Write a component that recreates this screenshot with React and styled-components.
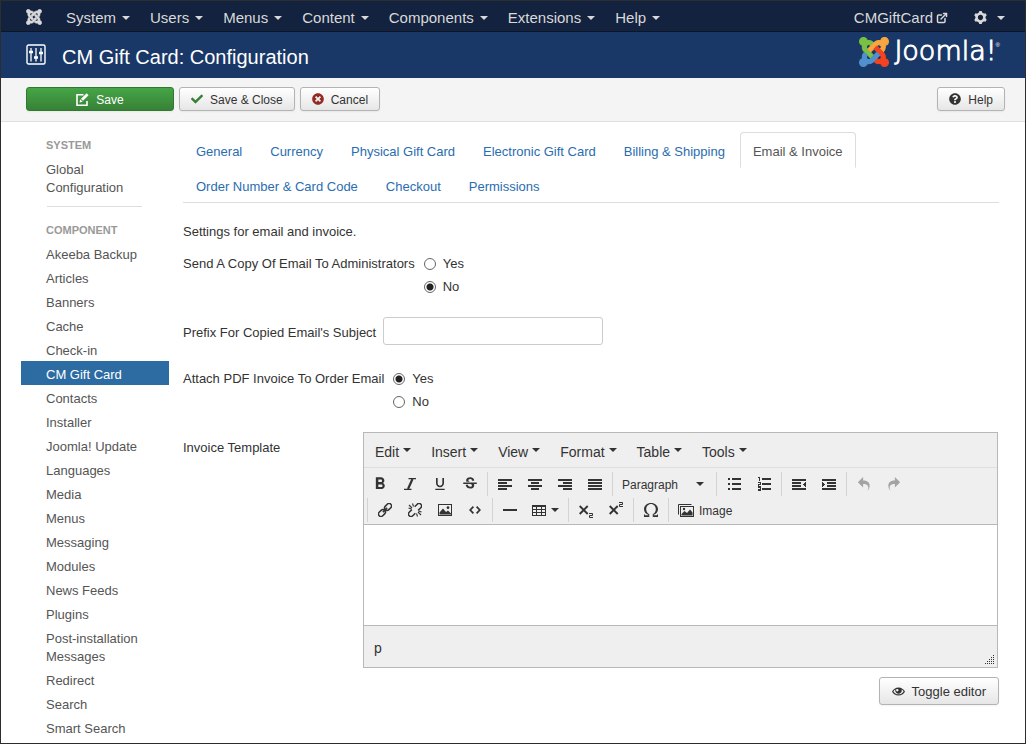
import React from 'react';
import styled, { createGlobalStyle, css } from 'styled-components';
import { ExternalLink } from 'lucide-react';
import { FaCheck, FaQuestionCircle, FaTimesCircle } from 'react-icons/fa';
import { MdFormatBold, MdFormatUnderlined, MdStrikethroughS } from 'react-icons/md';
import { ImCog, ImEye, ImOmega, ImRedo2, ImUndo2 } from 'react-icons/im';

const GlobalStyle = createGlobalStyle`
  *, *::before, *::after { box-sizing: border-box; }
  body {
    margin: 0;
    background: #fff;
    color: #333;
    font: 13px/18px "Liberation Sans", Arial, sans-serif;
  }
  button, input, select, textarea { font: inherit; color: inherit; margin: 0; }
  a { text-decoration: none; }
  svg { display: block; flex: none; }
`;

const Frame = styled.div`
  min-height: 100vh;
  border: 1px solid #2b2d2e;
  background: #fff;
`;

const Caret = styled.span`
  flex: none;
  width: 0;
  height: 0;
  border: 4px solid transparent;
  border-top-color: currentColor;
  border-bottom: 0;
`;

/* Top bars */

const NavBar = styled.nav`
  display: flex;
  align-items: center;
  height: 31px;
  padding: 0 10px 0 25px;
  background: #13223f;
  border-bottom: 1px solid #0b1629;
  color: #d9d9d9;
`;

const Brand = styled.a`
  margin: 2px 14px 0 0;
  color: #d9d9d9;
`;

const NavItem = styled.button`
  display: flex;
  align-items: center;
  gap: ${(p) => p.$gap || 6}px;
  padding: 3px 10px 0;
  border: 0;
  background: none;
  font-size: 15px;
  line-height: 20px;
`;

const SiteLink = styled(NavItem).attrs({ as: 'a' })`
  margin-left: auto;
  margin-right: 6px;
  color: #d9d9d9;
`;

const TitleBar = styled.header`
  display: flex;
  align-items: center;
  height: 46px;
  padding: 0 25px;
  background: #1a3867;
  color: #fff;
`;

const Title = styled.h1`
  margin: 3px 0 0 16px;
  font-size: 20px;
  line-height: 24px;
  font-weight: 400;
`;

const Logo = styled.a`
  display: flex;
  align-items: flex-start;
  gap: 5px;
  height: 36px;
  margin-left: auto;
  color: #fff;
`;

const Wordmark = styled.span`
  font: 200 27px/28px "DejaVu Sans", sans-serif;
  -webkit-text-stroke: 1px #fff;
`;

const Registered = styled.sup`
  margin-left: -6px;
  font-size: 6px;
  line-height: 16px;
`;

const ActionBar = styled.div`
  display: flex;
  gap: 5px;
  padding: 9px 20px 10px 25px;
  background: #f4f4f4;
  border-bottom: 1px solid #dfdfdf;
`;

const Button = styled.button`
  display: flex;
  align-items: center;
  justify-content: center;
  gap: 7px;
  height: ${(p) => (p.$large ? 28 : 24)}px;
  padding: 2px ${(p) => (p.$large ? 12 : 11)}px 0;
  border: 1px solid #b3b3b3;
  border-radius: 3px;
  background: linear-gradient(#fff, #e6e6e6);
  box-shadow: 0 1px 2px rgba(0, 0, 0, 0.05);
  font-size: ${(p) => (p.$large ? 13 : 12)}px;
  line-height: 18px;

  svg { margin-bottom: 2px; }

  ${(p) =>
    p.$primary &&
    css`
      width: 148px;
      border-color: #2f7a2f;
      background: linear-gradient(#46a546, #378137);
      color: #fff;
    `}
`;

const HelpButton = styled(Button)`
  margin-left: auto;
`;

/* Body */

const Body = styled.div`
  display: flex;
  align-items: flex-start;
  gap: 14px;
  padding: 0 26px 0 20px;
`;

const Sidebar = styled.nav`
  flex: none;
  width: 148px;
  padding-top: 11px;
`;

const SideHeading = styled.h2`
  margin: 0;
  padding: 3px 25px 2px;
  color: #999;
  font-size: 11px;
  line-height: 18px;
  font-weight: 700;
  text-transform: uppercase;
`;

const SideLink = styled.a`
  display: block;
  padding: 5px 25px 1px;
  color: ${(p) => (p.$active ? '#fff' : '#555')};
  background: ${(p) => (p.$active ? '#2d6ca2' : 'transparent')};
`;

const Divider = styled.hr`
  margin: 8px 27px 11px 26px;
  border: 0;
  border-top: 1px solid #ddd;
`;

const Main = styled.main`
  flex: 1;
  min-width: 0;
  padding-top: 10px;
`;

const Tabs = styled.ul`
  display: flex;
  flex-wrap: wrap;
  margin: 0 0 20px;
  padding: 0;
  list-style: none;
  border-bottom: 1px solid #ddd;
`;

const Tab = styled.li`
  margin: 0 2px -1px 0;
`;

const TabLink = styled.a`
  display: block;
  padding: 10px 12px 6px;
  border: 1px solid transparent;
  border-radius: 4px 4px 0 0;
  color: #2a6db0;

  ${(p) =>
    p.$active &&
    css`
      border-color: #ddd #ddd transparent;
      background: #fff;
      color: #555;
    `}
`;

const Intro = styled.p`
  margin: 0 0 6px;
`;

const Form = styled.form`
  display: flex;
  flex-direction: column;
  gap: 17px;
`;

const Field = styled.div`
  display: flex;
  align-items: center;
  gap: 7px;
`;

const FieldLabel = styled.label`
  padding-top: 3px;
`;

const RadioField = styled.div`
  display: flex;
  gap: 9px;
  padding: 8px 0 4px;
`;

const RadioList = styled.div`
  display: flex;
  flex-direction: column;
  gap: 5px;
`;

const RadioLabel = styled.label`
  display: flex;
  align-items: center;
  gap: 7px;
`;

const Radio = styled.input.attrs({ type: 'radio' })`
  appearance: none;
  width: 12px;
  height: 12px;
  border: 1px solid #666;
  border-radius: 50%;
  background: #fff;

  &:checked {
    background: radial-gradient(circle, #222 0 3px, #fff 4px);
  }
`;

const TextInput = styled.input`
  width: 220px;
  height: 28px;
  padding: 4px 6px;
  border: 1px solid #ccc;
  border-radius: 3px;
  background: #fff;
`;

const EditorField = styled.div`
  display: grid;
  grid-template-columns: 180px 1fr;
`;

const EditorLabel = styled.label`
  padding-top: 7px;
`;

const EditorColumn = styled.div`
  display: flex;
  flex-direction: column;
  align-items: flex-end;
  gap: 9px;
`;

/* Editor */

const Editor = styled.div`
  align-self: stretch;
  margin-right: 1px;
  border: 1px solid #b8b8b8;
  background: #efefef;
`;

const MenuBar = styled.div`
  display: flex;
  height: 35px;
  padding-left: 1px;
  border-bottom: 1px solid #dedede;
`;

const MenuButton = styled.button`
  display: flex;
  align-items: center;
  gap: 4px;
  padding: 3px 10px 0;
  border: 0;
  background: none;
  font-size: 14px;

  ${Caret} { margin-bottom: 4px; }
`;

const ToolRows = styled.div`
  display: flex;
  flex-direction: column;
  gap: 2px;
  padding: 4px 0 2px;
  border-bottom: 1px solid #b8b8b8;
`;

const ToolRow = styled.div`
  display: flex;
  padding-left: ${(p) => (p.$indent ? 3 : 0)}px;
`;

const ToolGroup = styled.div`
  display: flex;
  height: 24px;
  padding: 0 2px;
  border-left: 1px solid #d3d3d3;

  ${(p) =>
    p.$plain &&
    css`
      border-left: 0;
      padding-left: 1px;
    `}
`;

const Tool = styled.button`
  display: flex;
  align-items: center;
  justify-content: center;
  gap: 5px;
  width: ${(p) => (p.$wide ? 'auto' : '30px')};
  padding: ${(p) => (p.$wide ? '0 7px' : '0')};
  border: 0;
  background: none;
  font-size: 12px;
  color: ${(p) => (p.disabled ? '#a3a3a3' : '#333')};
`;

const FormatPicker = styled.label`
  display: flex;
  align-items: center;
  width: 99px;
  padding-right: 10px;
`;

const FormatSelect = styled.select`
  appearance: none;
  flex: 1;
  min-width: 0;
  padding: 2px 0 0 7px;
  border: 0;
  background: none;
  font-size: 12px;
`;

const ToolText = styled.span`
  padding-top: 2px;
`;

const EditorArea = styled.textarea`
  display: block;
  width: 100%;
  height: 100px;
  padding: 8px;
  border: 0;
  background: #fff;
  resize: none;
`;

const StatusBar = styled.div`
  display: flex;
  align-items: center;
  justify-content: space-between;
  height: 42px;
  padding: 3px 3px 0 10px;
  border-top: 1px solid #b8b8b8;
  font-size: 14px;
`;

const Grip = styled.svg`
  align-self: flex-end;
  margin-bottom: 3px;
`;

/* Drawings */

const JOOMLA_ARMS = [
  ['#7ac143', 'M.6 92.1C.6 58.8 27.4 32 60.4 32c30 0 54.5 21.9 59.2 50.2 32.6-7.6 67.1.6 96.5 30l-44.3 44.3c-20.5-20.5-42.6-16.3-55.4-3.5-14.3 14.3-14.3 37.9 0 52.2l99.5 99.5-44 44.3c-87.7-87.2-49.7-49.7-99.8-99.7-26.8-26.5-35-64.8-24.8-98.9C20.4 144.6.6 120.7.6 92.1z'],
  ['#f9a541', 'M130.1 208.5l44.3 44.3c10-10 89.7-89.7 99.7-99.8 14.3-14.3 37.6-14.3 51.9 0 12.8 12.8 17 35-3.5 55.4l44 44.3c31.2-31.2 38.5-67.6 28.9-101.2 29.2-4.1 51.9-29.2 51.9-59.5 0-33.2-26.8-60.1-59.8-60.1-30.3 0-55.4 22.5-59.5 51.6-33.8-9.9-71.7-1.5-98.3 25.1-18.3 19.1-71.1 71.5-99.6 99.9z'],
  ['#f44321', 'M396.4 360.7c8.2-32.7-.9-68.5-26.3-93.9-11.8-12.2 5 4.7-99.5-99.7l-44.3 44.3 99.7 99.7c14.3 14.3 14.3 37.6 0 51.9-12.8 12.8-35 17-55.4-3.5l-44 44.3c27.6 30.2 68 38.8 102.7 28 5.5 27.4 29.7 48.1 58.9 48.1 33 0 59.8-26.8 59.8-60.1 0-30.2-22.5-55-51.6-59.1z'],
  ['#5091cd', 'M312.1 307.6l-44-44.3c-87 86.4-50.4 50.4-99.7 99.8-14.3 14.3-37.6 14.3-51.9 0-13.1-13.4-16.9-35.3 3.2-55.4l-44-44.3c-30.2 30.2-38 65.2-29.5 98.3-26.7 6-46.2 29.9-46.2 58.2C0 453.2 26.8 480 59.8 480c28.6 0 52.5-19.8 58.6-46.7 32.7 8.2 68.5-.6 94.2-26 32.1-32 12.2-12.4 99.5-99.7z'],
];

const JoomlaMark = ({ size, mono }) => (
  <svg width={size} height={size} viewBox="-8 24 464 464" aria-hidden="true">
    {JOOMLA_ARMS.map(([color, d]) => (
      <path
        key={color}
        d={d}
        fill={mono ? 'currentColor' : color}
        stroke={mono ? 'currentColor' : color}
        strokeWidth="16"
      />
    ))}
  </svg>
);

const SlidersIcon = () => (
  <svg width="20" height="22" viewBox="0 0 20 22" fill="none" stroke="currentColor" aria-hidden="true">
    <rect x="1" y="1" width="18" height="19" rx="1.5" strokeWidth="1.4" />
    <path d="M5 4v13.500M10 4v13.500M15 4v13.500" strokeWidth="1.300" />
    <path d="M3 8h4M8 13.500h4M13 9h4" strokeWidth="2.400" />
  </svg>
);

const EditIcon = () => (
  <svg width="13" height="13" viewBox="0 0 13 13" fill="none" stroke="currentColor" aria-hidden="true">
    <path d="M7.500 1.800H1v10.400h10V8" strokeWidth="1.600" />
    <path d="M11.600 1.200L6 6.800" strokeWidth="2.800" />
    <path d="M4.200 6.200l2.500 2.500-3.200.8z" fill="currentColor" stroke="none" />
  </svg>
);

const Lines = ({ rows, children }) => (
  <svg width="14" height="11" viewBox="0 0 14 11" fill="currentColor" shapeRendering="crispEdges" aria-hidden="true">
    {rows.map(([x, w], i) => (
      <rect key={i} x={x} y={i * 3} width={w} height="2" />
    ))}
    {children}
  </svg>
);

const LEFT = [[0, 14], [0, 9], [0, 14], [0, 9]];
const CENTER = [[0, 14], [3, 8], [0, 14], [3, 8]];
const RIGHT = [[0, 14], [5, 9], [0, 14], [5, 9]];
const FULL = [[0, 14], [0, 14], [0, 14], [0, 14]];

const ItalicIcon = () => (
  <svg width="12" height="12" viewBox="0 0 12 12" fill="none" stroke="currentColor" aria-hidden="true">
    <path d="M4.500 .700H12M0 11.300h7.500" strokeWidth="1.300" />
    <path d="M8.500 1L4 11" strokeWidth="2.200" />
  </svg>
);

const ChainIcon = () => (
  <svg width="14" height="14" viewBox="0 0 14 14" fill="none" stroke="currentColor" strokeWidth="1.500" aria-hidden="true">
    <g transform="rotate(-45 7 7)">
      <rect x="-1.200" y="4.500" width="7.700" height="5" rx="2.500" />
      <rect x="7.500" y="4.500" width="7.700" height="5" rx="2.500" />
      <path d="M4 7h6" />
    </g>
  </svg>
);

const BrokenChainIcon = () => (
  <svg width="14" height="14" viewBox="0 0 14 14" fill="none" stroke="currentColor" aria-hidden="true">
    <g transform="rotate(-45 7 7)" strokeWidth="1.500">
      <path d="M5 4.500H1.300a2.500 2.500 0 0 0 0 5H5M9 4.500h3.700a2.500 2.500 0 0 1 0 5H9" />
    </g>
    <path d="M1 2l3 3M4.500 .5l1 3M.5 5l3 1M13 12l-3-3M9.500 13.500l-1-3M13.500 9l-3-1" strokeWidth="1.100" />
  </svg>
);

const BulletIcon = () => (
  <svg width="14" height="12" viewBox="0 0 14 12" fill="currentColor" shapeRendering="crispEdges" aria-hidden="true">
    <path d="M1 0h2v2H1zM1 5h2v2H1zM1 10h2v2H1zM5 0h9v2H5zM5 5h9v2H5zM5 10h9v2H5z" />
  </svg>
);

const NumberIcon = () => (
  <svg width="14" height="14" viewBox="0 0 14 14" fill="none" stroke="currentColor" shapeRendering="crispEdges" aria-hidden="true">
    <path d="M5 2h9M5 7h9M5 12h9" strokeWidth="2" />
    <path d="M1 .5h1M2.500 0v4M1 5.500h2.500v2h-2v2H4M1 10.500h2.500v3H1M1 12h2" />
  </svg>
);

const PictureIcon = () => (
  <svg width="14" height="12" viewBox="0 0 14 12" aria-hidden="true">
    <rect x=".5" y=".5" width="13" height="11" fill="none" stroke="currentColor" />
    <path d="M1.500 10.500V8.500l3.500-4 3 3.500 2-1.500 3 3v1z" fill="currentColor" />
    <circle cx="10" cy="3.700" r="1.400" fill="currentColor" />
  </svg>
);

const PicturesIcon = () => (
  <svg width="16" height="13" viewBox="0 0 16 13" fill="none" stroke="currentColor" aria-hidden="true">
    <path d="M.5 10.500V.5h13" />
    <rect x="2.500" y="2.500" width="13" height="10" />
    <path d="M3.500 11.500V10l3-3 2.500 2 3-3.500 2.500 3v3z" fill="currentColor" stroke="none" />
    <circle cx="6" cy="5" r="1.200" fill="currentColor" stroke="none" />
  </svg>
);

const CodeIcon = () => (
  <svg width="12" height="8" viewBox="0 0 12 8" fill="none" stroke="currentColor" strokeWidth="1.700" aria-hidden="true">
    <path d="M4.400 .6L1.200 4l3.200 3.400M7.600 .6L10.800 4 7.600 7.400" />
  </svg>
);

const RuleIcon = () => (
  <svg width="14" height="2" viewBox="0 0 14 2" aria-hidden="true">
    <path d="M0 0h14v2H0z" fill="currentColor" />
  </svg>
);

const TableIcon = () => (
  <svg width="14" height="11" viewBox="0 0 14 11" fill="none" stroke="currentColor" shapeRendering="crispEdges" aria-hidden="true">
    <path d="M.5 .5h13v10H.5zM0 1.500h14M0 4.500h14M0 7.500h14M4.500 0v11M9.500 0v11" />
  </svg>
);

const ScriptIcon = ({ up }) => (
  <svg width="14" height="16" viewBox="0 0 14 16" fill="none" stroke="currentColor" aria-hidden="true">
    <path d="M.7 4l8 8M8.700 4l-8 8" strokeWidth="1.900" />
    <path d={up ? 'M10 .5h3.500v2h-3v2H14' : 'M10 11.500h3.500v2h-3v2H14'} />
  </svg>
);

const GRIP_DOTS = [0, 1, 2, 3, 4].flatMap((row) =>
  Array.from({ length: row + 1 }, (_, i) => [8 - i * 2, row * 2])
);

/* Data */

const MENUS = ['System', 'Users', 'Menus', 'Content', 'Components', 'Extensions', 'Help'];

const COMPONENTS = [
  'Akeeba Backup', 'Articles', 'Banners', 'Cache', 'Check-in', 'CM Gift Card', 'Contacts',
  'Installer', 'Joomla! Update', 'Languages', 'Media', 'Menus', 'Messaging', 'Modules',
  'News Feeds', 'Plugins', 'Post-installation Messages', 'Redirect', 'Search', 'Smart Search',
];

const TABS = [
  'General', 'Currency', 'Physical Gift Card', 'Electronic Gift Card', 'Billing & Shipping',
  'Email & Invoice', 'Order Number & Card Code', 'Checkout', 'Permissions',
];

const EDITOR_MENUS = ['Edit', 'Insert', 'View', 'Format', 'Table', 'Tools'];

const TOOLS_TOP = [
  [
    { name: 'Bold', icon: <MdFormatBold size={20} /> },
    { name: 'Italic', icon: <ItalicIcon /> },
    { name: 'Underline', icon: <MdFormatUnderlined size={16} /> },
    { name: 'Strikethrough', icon: <MdStrikethroughS size={18} /> },
  ],
  [
    { name: 'Align left', icon: <Lines rows={LEFT} /> },
    { name: 'Align center', icon: <Lines rows={CENTER} /> },
    { name: 'Align right', icon: <Lines rows={RIGHT} /> },
    { name: 'Justify', icon: <Lines rows={FULL} /> },
  ],
];

const TOOLS_TOP_END = [
  [
    { name: 'Bullet list', icon: <BulletIcon /> },
    { name: 'Numbered list', icon: <NumberIcon /> },
  ],
  [
    {
      name: 'Decrease indent',
      icon: <Lines rows={[[0, 14], [0, 9], [0, 9], [0, 14]]}><path d="M14 3v5l-3-2.500z" /></Lines>,
    },
    {
      name: 'Increase indent',
      icon: <Lines rows={[[0, 14], [5, 9], [5, 9], [0, 14]]}><path d="M0 3v5l3-2.500z" /></Lines>,
    },
  ],
  [
    { name: 'Undo', icon: <ImUndo2 size={14} />, disabled: true },
    { name: 'Redo', icon: <ImRedo2 size={14} />, disabled: true },
  ],
];

const TOOLS_BOTTOM = [
  [
    { name: 'Insert link', icon: <ChainIcon /> },
    { name: 'Remove link', icon: <BrokenChainIcon /> },
    { name: 'Insert image', icon: <PictureIcon /> },
    { name: 'Source code', icon: <CodeIcon /> },
  ],
  [
    { name: 'Horizontal line', icon: <RuleIcon /> },
    { name: 'Table', icon: <><TableIcon /><Caret /></>, wide: true },
  ],
  [
    { name: 'Subscript', icon: <ScriptIcon /> },
    { name: 'Superscript', icon: <ScriptIcon up /> },
  ],
  [{ name: 'Special character', icon: <ImOmega size={14} /> }],
];

const Groups = ({ groups, plainFirst }) =>
  groups.map((tools, i) => (
    <ToolGroup key={i} $plain={plainFirst && i === 0}>
      {tools.map(({ name, icon, disabled, wide }) => (
        <Tool key={name} type="button" aria-label={name} disabled={disabled} $wide={wide}>
          {icon}
        </Tool>
      ))}
    </ToolGroup>
  ));

const YesNo = ({ label, name, value }) => (
  <RadioField role="radiogroup" aria-label={label}>
    <span>{label}</span>
    <RadioList>
      {['Yes', 'No'].map((option) => (
        <RadioLabel key={option}>
          <Radio name={name} value={option} defaultChecked={option === value} />
          {option}
        </RadioLabel>
      ))}
    </RadioList>
  </RadioField>
);

export default function App() {
  return (
    <Frame>
      <GlobalStyle />
      <NavBar>
        <Brand href="#" aria-label="Control panel"><JoomlaMark size={16} mono /></Brand>
        {MENUS.map((menu) => (
          <NavItem key={menu} type="button">{menu}<Caret /></NavItem>
        ))}
        <SiteLink href="#" $gap={3}>CMGiftCard<ExternalLink size={12} strokeWidth={3} /></SiteLink>
        <NavItem type="button" aria-label="Account" $gap={10}><ImCog size={13} /><Caret /></NavItem>
      </NavBar>
      <TitleBar>
        <SlidersIcon />
        <Title>CM Gift Card: Configuration</Title>
        <Logo href="#" aria-label="Joomla!">
          <JoomlaMark size={30} />
          <Wordmark>Joomla!</Wordmark>
          <Registered>®</Registered>
        </Logo>
      </TitleBar>
      <ActionBar>
        <Button type="button" $primary><EditIcon />Save</Button>
        <Button type="button"><FaCheck size={12} color="#378137" />Save &amp; Close</Button>
        <Button type="button"><FaTimesCircle size={12} color="#942a25" />Cancel</Button>
        <HelpButton type="button"><FaQuestionCircle size={12} />Help</HelpButton>
      </ActionBar>
      <Body>
        <Sidebar>
          <SideHeading>System</SideHeading>
          <SideLink href="#">Global Configuration</SideLink>
          <Divider />
          <SideHeading>Component</SideHeading>
          {COMPONENTS.map((name) => (
            <SideLink key={name} href="#" $active={name === 'CM Gift Card'}>{name}</SideLink>
          ))}
        </Sidebar>
        <Main>
          <Tabs>
            {TABS.map((tab) => (
              <Tab key={tab}><TabLink href="#" $active={tab === 'Email & Invoice'}>{tab}</TabLink></Tab>
            ))}
          </Tabs>
          <Intro>Settings for email and invoice.</Intro>
          <Form>
            <YesNo label="Send A Copy Of Email To Administrators" name="copy" value="No" />
            <Field>
              <FieldLabel htmlFor="prefix">Prefix For Copied Email's Subject</FieldLabel>
              <TextInput id="prefix" type="text" />
            </Field>
            <YesNo label="Attach PDF Invoice To Order Email" name="attach" value="Yes" />
            <EditorField>
              <EditorLabel htmlFor="template">Invoice Template</EditorLabel>
              <EditorColumn>
                <Editor>
                  <MenuBar>
                    {EDITOR_MENUS.map((menu) => (
                      <MenuButton key={menu} type="button">{menu}<Caret /></MenuButton>
                    ))}
                  </MenuBar>
                  <ToolRows>
                    <ToolRow>
                      <Groups groups={TOOLS_TOP} plainFirst />
                      <ToolGroup>
                        <FormatPicker>
                          <FormatSelect aria-label="Block format">
                            <option>Paragraph</option>
                          </FormatSelect>
                          <Caret />
                        </FormatPicker>
                      </ToolGroup>
                      <Groups groups={TOOLS_TOP_END} />
                    </ToolRow>
                    <ToolRow $indent>
                      <Groups groups={TOOLS_BOTTOM} />
                      <ToolGroup>
                        <Tool type="button" $wide><PicturesIcon /><ToolText>Image</ToolText></Tool>
                      </ToolGroup>
                    </ToolRow>
                  </ToolRows>
                  <EditorArea id="template" />
                  <StatusBar>
                    <span>p</span>
                    <Grip width="9" height="9" viewBox="0 0 9 9" shapeRendering="crispEdges" aria-hidden="true">
                      {GRIP_DOTS.map(([x, y]) => (
                        <rect key={`${x}-${y}`} x={x} y={y} width="1" height="1" fill="#333" />
                      ))}
                    </Grip>
                  </StatusBar>
                </Editor>
                <Button type="button" $large><ImEye size={13} />Toggle editor</Button>
              </EditorColumn>
            </EditorField>
          </Form>
        </Main>
      </Body>
    </Frame>
  );
}
